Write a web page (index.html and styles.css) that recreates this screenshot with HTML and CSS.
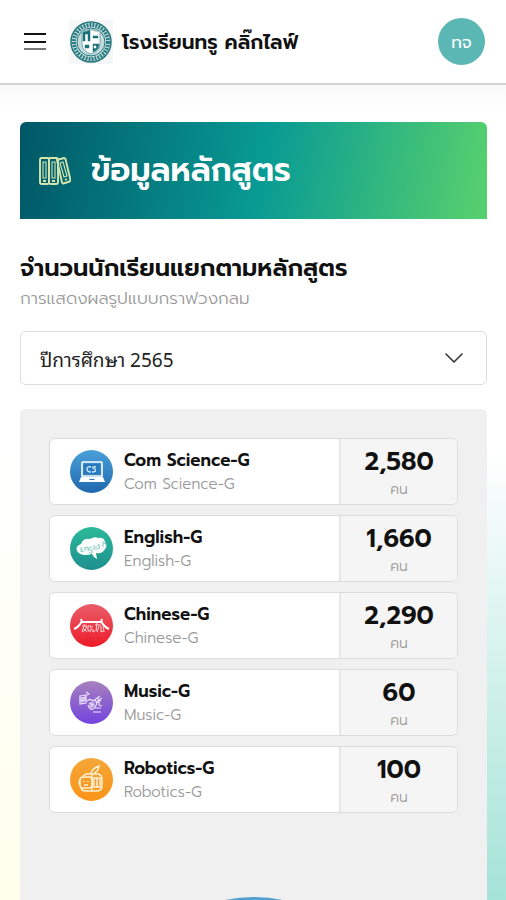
FILE: index.html
```html
<!DOCTYPE html>
<html lang="th">
<head>
<meta charset="utf-8">
<meta name="viewport" content="width=device-width, initial-scale=1">
<title>ข้อมูลหลักสูตร</title>
<link rel="stylesheet" href="styles.css">
</head>
<body>
<header class="topbar">
  <button class="menu" type="button" aria-label="เมนู">
    <svg width="22" height="18" viewBox="0 0 22 18" fill="none" stroke-width="2"><path d="M0 1h22M0 9h22" stroke="#111"/><path d="M0 16h22" stroke="#777"/></svg>
  </button>
  <svg class="crest" viewBox="0 0 44 44" aria-hidden="true">
    <path fill="#f5f6f7" d="M0 0h44v44H0z"/>
    <circle cx="22" cy="22" r="20" fill="#d5e6e7" stroke="#22777c" stroke-width="1.5"/>
    <circle cx="22" cy="22" r="17" fill="none" stroke="#2b7c81" stroke-width="4" stroke-dasharray="2 1"/>
    <circle cx="22" cy="22" r="14" fill="#c4dcde" stroke="#247a7f"/>
    <path d="M13 11q5 1 9-2 4 3 9 2v13q0 7-9 10-9-3-9-10z" fill="#fff" stroke="#76a9ac"/>
    <path d="M14 12q4 0 7-2v11h-2v-7h-3v7h-2zM24 16h5v2h-5zM16 25h4v3h-4zM24 24h6q0 6-6 8zM9 12l2-2M33 34l2-2M9 32l2 2M33 10l2 2" fill="#19727a" stroke="#19727a" stroke-width=".5"/>
    <circle cx="26" cy="27" r="1.4" fill="#fff"/>
  </svg>
  <p class="school">โรงเรียนทรู คลิ๊กไลฟ์</p>
  <button class="avatar" type="button">ทจ</button>
</header>
<main class="page">
  <div class="banner">
    <svg class="books" viewBox="0 0 32 30" fill="none" stroke="#d5e5b0" stroke-width="1.9" aria-hidden="true">
      <rect x="1" y="2" width="9" height="26" rx="1.5"/><rect x="10" y="2" width="9" height="26" rx="1.5"/>
      <path d="M18 4l7-2q1 0 1.500 1l5 21q0 1-1 1.500l-6 2q-1 0-1.500-1z"/>
      <path d="M4 6h3v16H4zM13 6h3v16h-3zM21 7l3-1 4 14-3 1z" stroke-width="1.1"/>
      <path d="M4 25h3M13 25h3M26 24l2-1"/>
    </svg>
    <h1>ข้อมูลหลักสูตร</h1>
  </div>
  <h2>จำนวนนักเรียนแยกตามหลักสูตร</h2>
  <p class="note">การแสดงผลรูปแบบกราฟวงกลม</p>
  <div class="picker">
    <select aria-label="ปีการศึกษา"><option>ปีการศึกษา 2565</option></select>
    <svg class="chevron" viewBox="0 0 18 10" fill="none" stroke="#333" stroke-width="1.6" stroke-linecap="round" stroke-linejoin="round" aria-hidden="true"><path d="M1 1l8 8 8-8"/></svg>
  </div>
  <section class="panel">
    <ul class="courses">
      <li class="course">
        <span class="icon blue"><svg viewBox="0 0 43 43" aria-hidden="true"><path d="M13 12h18q1 0 1 1v13H12V13q0-1 1-1z" fill="none" stroke="#fff" stroke-width="1.600"/><path d="M14 14h16v10H14z" fill="#2879bd"/><path d="M11 27h22l2 5H9z" fill="#fff"/><path d="M19 29h6l-1 1h-4z" fill="#2879bd"/><path d="M21 17q-4-1-4 2t4 3M26 17q-4-1-3 1l2 1q2 3-3 3" fill="none" stroke="#d4eafa" stroke-width="1.300"/></svg></span>
        <div class="names"><h3>Com Science-G</h3><p>Com Science-G</p></div>
        <div class="count"><strong>2,580</strong><span>คน</span></div>
      </li>
      <li class="course">
        <span class="icon green"><svg viewBox="0 0 43 43" aria-hidden="true"><path d="M7 24q-2-5 4-7 2-6 9-5 5-3 8-1 6-1 7 4 3 4 0 7-2 5-9 4l1 6q-4-2-5-5-11 3-15-3z" fill="#fff"/><path d="M11 20v5l3-1m-3-1 2-1m2 2v-4m0 1 3-1v4m4-4q-4 0-3 3h3v3q-2 1-3-1m5-7v5m2-4v4m4-5q-3-1-2 1l2 1q0 3-3 1m6-7v6m0-3 3-1v3" fill="none" stroke="#6cc0b4" stroke-width=".8"/></svg></span>
        <div class="names"><h3>English-G</h3><p>English-G</p></div>
        <div class="count"><strong>1,660</strong><span>คน</span></div>
      </li>
      <li class="course">
        <span class="icon red"><svg viewBox="0 0 43 43" fill="none" stroke="#fff" aria-hidden="true"><path d="M11 15l1 3h19l1-3M12 17q-3 6-8 8M31 17q3 6 8 8" stroke-width="2"/><path d="M12 22h5m-2-2-3 7m1-3 4 4m0-6q-1 5-5 6M18 22h3v5h-3zM22 22l1 1m0 2v3l2-1m0-6h6m-4-2-1 8m3-5-2 6m4-6v6l2-1M33 22l1 6" stroke-width="1" stroke="#ffd6d9"/></svg></span>
        <div class="names"><h3>Chinese-G</h3><p>Chinese-G</p></div>
        <div class="count"><strong>2,290</strong><span>คน</span></div>
      </li>
      <li class="course">
        <span class="icon purple"><svg viewBox="0 0 43 43" fill="none" stroke="#eadfff" aria-hidden="true"><path d="M10 15l6-1v8l-6 1zM12 17l3-1v3l-3 1zM16 11l3 2-2 1M17 20q3-3 6 0l7-5M18 24q2 7 6 3t2-6l6-4M20 22l3 2-3 2M24 19l5 3M27 17l4 3M23 31h8M25 27h6M29 19v5l3 1" stroke-width="1.200"/><path d="M10 17h4v4h-4zM19 22l4-1 2 3-4 3z" fill="#eadfff" opacity=".6"/></svg></span>
        <div class="names"><h3>Music-G</h3><p>Music-G</p></div>
        <div class="count"><strong>60</strong><span>คน</span></div>
      </li>
      <li class="course">
        <span class="icon orange"><svg viewBox="0 0 43 43" fill="none" stroke="#fff1d5" stroke-width="1.500" aria-hidden="true"><rect x="10" y="19" width="12" height="11" rx="3"/><path d="M13 18q3-3 8-2h7q4 1 4 5v8q-1 4-6 4H15q-3 0-4-3M22 17v16M24 20h6v9h-6zM27 20v9M21 16q1-6 8-8-1 6-5 7M14 23v1m4-1v1m-4 3h4M10 22q-2 2 0 5" /></svg></span>
        <div class="names"><h3>Robotics-G</h3><p>Robotics-G</p></div>
        <div class="count"><strong>100</strong><span>คน</span></div>
      </li>
    </ul>
    <div class="chart"><svg viewBox="0 0 282 282" role="img" aria-label="กราฟวงกลม"><circle cx="141" cy="141" r="100" fill="none" stroke="#529fd0" stroke-width="82"/></svg></div>
  </section>
</main>
</body>
</html>
```
FILE: styles.css
```css
* { box-sizing: border-box; }
body {
  margin: 0;
  height: 100vh;
  display: flex;
  flex-direction: column;
  overflow: hidden;
  color: #111;
  font-family: Prompt, Kanit, "Noto Sans Thai", "Noto Sans", sans-serif;
  background:
    linear-gradient(#fff 50%, transparent 100%),
    linear-gradient(90deg, #ffffec 4%, transparent 50%, #a5e3d8 96%),
    #fff;
}
h1, h2, h3, p, ul { margin: 0; padding: 0; }
button { border: 0; padding: 0; font: inherit; }
.topbar {
  flex: none;
  height: 85px;
  display: flex;
  align-items: center;
  padding: 0 21px 0 24px;
  background: #fff;
  border-bottom: 2px solid #d2d2d2;
}
.menu { display: flex; background: none; }
.crest { width: 44px; height: 44px; margin-left: 23px; }
.school { flex: 1; margin-left: 9px; font-size: 20px; line-height: 32px; font-weight: 600; white-space: nowrap; }
.avatar { width: 47px; height: 47px; border-radius: 50%; background: #5bb7b3; color: #fff; font-size: 17px; }
.page {
  flex: 1;
  min-height: 0;
  display: flex;
  flex-direction: column;
  padding: 37px 19px 0 20px;
  background: linear-gradient(#fafafa, transparent 32px);
}
.banner {
  flex: none;
  height: 97px;
  display: flex;
  align-items: center;
  gap: 20px;
  padding: 0 19px;
  border-radius: 6px 6px 0 0;
  color: #fff;
  background: linear-gradient(100deg, #005766, #089b94 52%, #55cf6e 98%);
}
.books { width: 32px; height: 30px; }
h1 { font-size: 32px; line-height: 48px; font-weight: 600; white-space: nowrap; }
h2 { margin-top: 32px; font-size: 24px; line-height: 34px; font-weight: 600; white-space: nowrap; }
.note { font-size: 17px; line-height: 26px; font-weight: 300; color: #999; }
.picker { flex: none; position: relative; margin-top: 20px; }
select {
  appearance: none;
  display: block;
  width: 100%;
  height: 54px;
  padding: 0 50px 0 19px;
  border: 1px solid #dcdcdc;
  border-radius: 6px;
  background: #fff;
  color: #222;
  font-family: "Noto Sans Thai Looped", "Noto Looped Thai", Sarabun, "Noto Sans", "Loma", sans-serif;
  font-size: 19px;
}
.chevron { position: absolute; right: 24px; top: 22px; width: 18px; height: 10px; pointer-events: none; }
.panel {
  flex: 1;
  min-height: 0;
  display: flex;
  flex-direction: column;
  margin-top: 24px;
  padding: 29px 29px 0;
  border-radius: 5px 5px 0 0;
  background: #f0f0f0;
}
.courses { list-style: none; display: grid; gap: 10px; }
.course {
  height: 67px;
  display: flex;
  align-items: center;
  border: 1px solid #dcdcdc;
  border-radius: 6px;
  background: #fff;
  overflow: hidden;
}
.icon { width: 43px; height: 43px; margin-left: 20px; border-radius: 50%; }
.icon svg { display: block; }
.blue { background: linear-gradient(#4ba0d9, #1e68ae); }
.green { background: linear-gradient(#2cb99a, #1d908f); }
.red { background: linear-gradient(#e95d69, #ee1b29); }
.purple { background: linear-gradient(#a681bd, #7343de); }
.orange { background: linear-gradient(#f5a638, #fa9417); }
.names { flex: 1; margin-left: 11px; }
h3 { font-size: 17px; line-height: 24px; font-weight: 600; }
.names p { font-size: 15px; line-height: 24px; font-weight: 300; color: #999; }
.count {
  width: 118px;
  height: 100%;
  padding-top: 4px;
  display: flex;
  flex-direction: column;
  align-items: center;
  justify-content: center;
  border-left: 2px solid #e6e6e6;
  background: #f5f5f5;
}
.count strong { font-size: 25px; line-height: 32px; font-weight: 600; }
.count span { font-size: 14px; line-height: 24px; color: #999; font-weight: 300; }
.chart { flex: 1; min-height: 0; overflow: hidden; padding-top: 84px; }
.chart svg { display: block; width: 282px; height: 282px; margin: 0 auto; }
```
